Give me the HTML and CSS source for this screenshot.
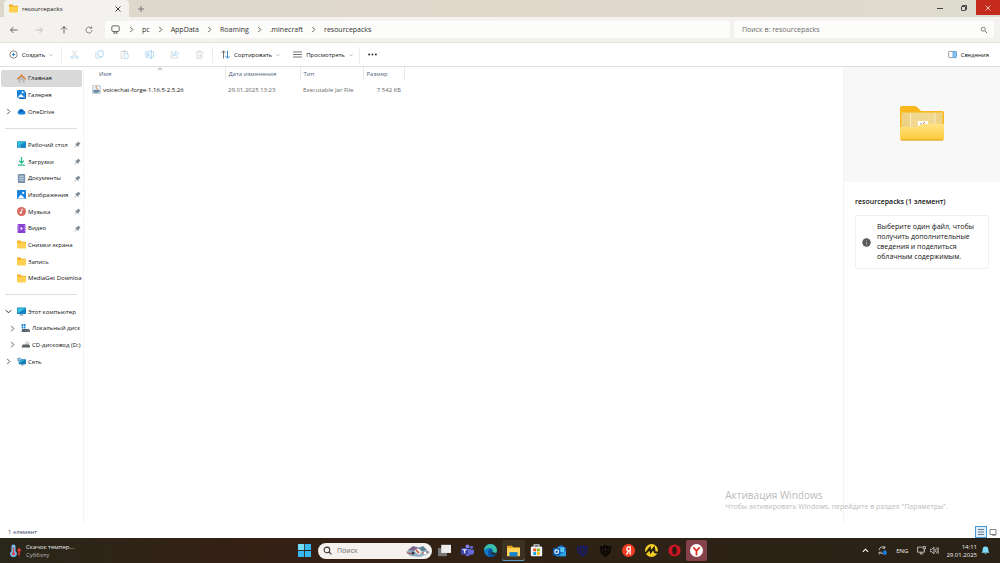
FILE: index.html
```html
<!DOCTYPE html>
<html lang="ru">
<head>
    <title>resourcepacks</title>
    <meta charset="UTF-8">
    <meta name="viewport" content="width=device-width, initial-scale=1.0">
    <link rel="stylesheet" href="styles.css">
</head>
<body>
    <!-- shared icons -->
    <svg class="sprite" aria-hidden="true">
        <symbol id="folder" viewBox="0 0 16 16">
            <path d="M0 3Q0 1 1.500 1H6l2 2h6.500Q16 3 16 4.500V8H0z" fill="#f0ab1c"/>
            <rect x="0" y="4.500" width="16" height="10.500" rx="1.200" fill="#ffd050"/>
        </symbol>
        <symbol id="right" viewBox="0 0 8 8"><path d="M2.500 1l3 3-3 3" fill="none" stroke="currentColor" stroke-width="1.100"/></symbol>
        <symbol id="down" viewBox="0 0 8 8"><path d="M1 2.500l3 3 3-3" fill="none" stroke="currentColor" stroke-width="1.100"/></symbol>
        <symbol id="pin" viewBox="0 0 16 16"><path d="M9.500 1l5.500 5.500-1.500.5-3 3-.5 4-3.500-3.500L2 15l-1-1 4.500-4.500L2 6l4-.5 3-3z" fill="#7f8b93"/></symbol>
        <symbol id="monitor" viewBox="0 0 16 16">
            <rect x="0" y="1" width="16" height="11.500" rx="1" fill="#1583c4"/>
            <path d="M1 2h14L1 11.500z" fill="#35c6df"/>
            <path d="M6 12.500h4V14h2v1H4v-1h2z" fill="#8795a0"/>
        </symbol>
        <symbol id="picture" viewBox="0 0 16 16">
            <rect width="16" height="16" rx="2" fill="#1683dc"/>
            <path d="M1 15l6-7 7 7z" fill="#fff"/>
            <circle cx="11" cy="5" r="2" fill="#fff"/>
        </symbol>
        <symbol id="shield" viewBox="0 0 16 16">
            <path d="M1 2l3 1 4-2 4 2 3-1-1 9-6 5-6-5z" fill="currentColor"/>
            <path d="M4.500 5v4L8 12l3.500-3V5M8 4v5M6 7h4" fill="none" stroke="#2c2014" stroke-width="1"/>
        </symbol>
    </svg>

    <header class="titlebar">
        <div class="tab">
            <svg class="icon"><use href="#folder"/></svg>
            <span class="tab-title">resourcepacks</span>
            <button class="tab-close" aria-label="Закрыть вкладку">
                <svg class="glyph" viewBox="0 0 8 8"><path d="M1.500 1.500l5 5M6.500 1.500l-5 5" stroke="#444"/></svg>
            </button>
        </div>
        <button class="tab-add" aria-label="Новая вкладка">
            <svg class="glyph" viewBox="0 0 8 8"><path d="M4 1v6M1 4h6" stroke="#777"/></svg>
        </button>
        <div class="window-buttons">
            <button aria-label="Свернуть"><svg class="glyph" viewBox="0 0 8 8"><path d="M1 4.500h6" stroke="#444"/></svg></button>
            <button aria-label="Свернуть в окно">
                <svg class="glyph" viewBox="0 0 8 8"><path d="M2.500 2V1.500h4v4H6" fill="none" stroke="#444"/><rect x="1.500" y="2.500" width="4" height="4" rx=".5" fill="none" stroke="#444"/></svg>
            </button>
            <button class="close" aria-label="Закрыть"><svg class="glyph" viewBox="0 0 8 8"><path d="M1.500 1.500l5 5M6.500 1.500l-5 5" stroke="#f0b5ac"/></svg></button>
        </div>
    </header>

    <div class="navbar">
        <div class="nav-buttons">
            <button aria-label="Назад"><svg class="glyph" viewBox="0 0 8 8"><path d="M7.500 4h-7M3.500 1l-3 3 3 3" fill="none" stroke="#555" stroke-width=".9"/></svg></button>
            <button aria-label="Вперед"><svg class="glyph" viewBox="0 0 8 8"><path d="M.5 4h7M4.500 1l3 3-3 3" fill="none" stroke="#b9b9b6" stroke-width=".9"/></svg></button>
            <button aria-label="Вверх"><svg class="glyph" viewBox="0 0 8 8"><path d="M4 7.500v-7M1 3.500l3-3 3 3" fill="none" stroke="#555" stroke-width=".9"/></svg></button>
            <button aria-label="Обновить"><svg class="glyph" viewBox="0 0 8 8"><path d="M7 4a3 3 0 1 1-1-2.200M6.700.5v1.800H4.900" fill="none" stroke="#666" stroke-width=".8"/></svg></button>
        </div>
        <nav class="address" aria-label="Адрес">
            <svg class="icon" viewBox="0 0 16 16"><rect x="1.500" y="1.500" width="13" height="10" rx="2" fill="none" stroke="#555" stroke-width="1.600"/><path d="M6 12v2M10 12v2M4 14.500h8" stroke="#555" stroke-width="1.400"/></svg>
            <svg class="chevron"><use href="#right"/></svg>
            <a href="#">pc</a>
            <svg class="chevron"><use href="#right"/></svg>
            <a href="#">AppData</a>
            <svg class="chevron"><use href="#right"/></svg>
            <a href="#">Roaming</a>
            <svg class="chevron"><use href="#right"/></svg>
            <a href="#">.minecraft</a>
            <svg class="chevron"><use href="#right"/></svg>
            <a href="#">resourcepacks</a>
        </nav>
        <label class="search">
            <input type="text" placeholder="Поиск в: resourcepacks" aria-label="Поиск в: resourcepacks">
            <svg class="glyph" viewBox="0 0 8 8"><circle cx="3.200" cy="3.200" r="2" fill="none" stroke="#666" stroke-width=".8"/><path d="M4.800 4.800L7 7" stroke="#666" stroke-width=".9"/></svg>
        </label>
    </div>

    <div class="toolbar">
        <button class="create">
            <svg class="icon" viewBox="0 0 16 16"><circle cx="8" cy="8" r="6.500" fill="none" stroke="#666" stroke-width="1.300"/><path d="M8 5v6M5 8h6" stroke="#2a83c9" stroke-width="1.600"/></svg>
            Создать
            <svg class="caret"><use href="#down"/></svg>
        </button>
        <div class="file-actions">
            <button aria-label="Вырезать"><svg class="icon" viewBox="0 0 16 16"><path d="M4 1l6.500 10M12 1L5.500 11" stroke="#ccc" stroke-width="1.300"/><circle cx="4" cy="13" r="2.200" fill="none" stroke="#9fcdee" stroke-width="1.300"/><circle cx="12" cy="13" r="2.200" fill="none" stroke="#9fcdee" stroke-width="1.300"/></svg></button>
            <button aria-label="Копировать"><svg class="icon" viewBox="0 0 16 16"><rect x="5.500" y="1.500" width="9" height="10" rx="2" fill="none" stroke="#9fcdee" stroke-width="1.400"/><path d="M3 5H1.500v9.500H10V13" fill="none" stroke="#b3d5ee" stroke-width="1.400"/></svg></button>
            <button aria-label="Вставить"><svg class="icon" viewBox="0 0 16 16"><path d="M6 15H2V2.500h11V6M5 1.500h5v2H5z" fill="none" stroke="#ccc" stroke-width="1.300"/><rect x="7.500" y="6.500" width="7" height="8.500" rx="1" fill="none" stroke="#9fcdee" stroke-width="1.300"/></svg></button>
            <button aria-label="Переименовать"><svg class="icon" viewBox="0 0 16 16"><path d="M9 3H1.500v10H9M13 3h2v10h-2M3.500 11l2-6 2 6M4.300 9h2.500" fill="none" stroke="#9fcdee" stroke-width="1.300"/><path d="M11 1v14M9.500 1h3M9.500 15h3" stroke="#8fc1e6" stroke-width="1.300"/></svg></button>
            <button aria-label="Поделиться"><svg class="icon" viewBox="0 0 16 16"><path d="M6 3H2v11.500h11V11" fill="none" stroke="#ccc" stroke-width="1.300"/><path d="M5 11q0-6 5-6V2l5 4.500-5 4V8q-3 0-5 3z" fill="none" stroke="#9fcdee" stroke-width="1.300"/></svg></button>
            <button aria-label="Удалить"><svg class="icon" viewBox="0 0 16 16"><path d="M1.500 3.500h13M6 3V1.500h4V3M3 4l1 11h8l1-11M6.500 7v5M9.500 7v5" fill="none" stroke="#ccc" stroke-width="1.300"/></svg></button>
        </div>
        <button class="view-button">
            <svg class="icon" viewBox="0 0 16 16"><path d="M4.500 15V1.500M1 5l3.500-3.500L8 5" fill="none" stroke="#555" stroke-width="1.500"/><path d="M11.500 1v13.500M8 11l3.500 3.500L15 11" fill="none" stroke="#2a83c9" stroke-width="1.700"/></svg>
            Сортировать
            <svg class="caret"><use href="#down"/></svg>
        </button>
        <button class="view-button">
            <svg class="icon" viewBox="0 0 16 16"><path d="M0 3.500h16M0 8h16M0 12.500h16" stroke="#666" stroke-width="1.600"/></svg>
            Просмотреть
            <svg class="caret"><use href="#down"/></svg>
        </button>
        <button class="more" aria-label="Подробнее"><svg class="icon" viewBox="0 0 16 16"><circle cx="2" cy="8" r="1.800" fill="#333"/><circle cx="8" cy="8" r="1.800" fill="#333"/><circle cx="14" cy="8" r="1.800" fill="#333"/></svg></button>
        <button class="details">
            <svg class="icon" viewBox="0 0 16 16"><path d="M9 2.500H2.500q-1.500 0-1.500 1.500v8q0 1.500 1.500 1.500H9" fill="none" stroke="#777" stroke-width="1.300"/><rect x="9" y="2.500" width="6" height="11" rx="1.500" fill="#8ccaf3" stroke="#2a83c9" stroke-width="1.300"/></svg>
            Сведения
        </button>
    </div>

    <div class="content">
        <nav class="sidebar" aria-label="Папки">
            <a href="#" class="active"><i></i>
                <svg class="icon" viewBox="0 0 16 16"><path d="M2.500 7v8.500h4v-5h3v5h4V7L8 3z" fill="#b9bdc1"/><path d="M.8 9.500L8 2l7.200 7.500" fill="none" stroke="#df7b27" stroke-width="2.400"/></svg>
                <span>Главная</span></a>
            <a href="#"><i></i><svg class="icon" viewBox="0 0 16 16"><path d="M4 14v2h10q2 0 2-2V4h-2v10z" fill="#0c5fae"/><rect width="14" height="14" rx="2" fill="#1683dc"/><path d="M1 13l6-6 6 6z" fill="#fff"/><circle cx="10" cy="4" r="1.800" fill="#fff"/></svg><span>Галерея</span></a>
            <a href="#"><svg class="chevron"><use href="#right"/></svg>
                <svg class="icon" viewBox="0 0 16 16"><path d="M4 13.500a4 4 0 0 1-.5-7.500A5 5 0 0 1 12 6.500a3.600 3.600 0 0 1 .5 7z" fill="#1583de"/><path d="M3.500 6A5 5 0 0 1 12 6.500L6 10z" fill="#0a5fb4"/></svg>
                <span>OneDrive</span></a>
            <hr>
            <a href="#"><i></i><svg class="icon" viewBox="0 0 16 16"><rect y="2" width="16" height="12" rx="1.500" fill="#1687c9"/><path d="M1 3h14L1 12z" fill="#32c4dc"/><path d="M2 12.500h5" stroke="#fff"/></svg><span>Рабочий стол</span><svg class="pin"><use href="#pin"/></svg></a>
            <a href="#"><i></i><svg class="icon" viewBox="0 0 16 16"><path d="M8 0v10.500M3.500 6.500L8 11l4.500-4.500M2 14.500h12" fill="none" stroke="#22b487" stroke-width="2.200"/></svg><span>Загрузки</span><svg class="pin"><use href="#pin"/></svg></a>
            <a href="#"><i></i><svg class="icon" viewBox="0 0 16 16"><rect x="1.500" y="0" width="13" height="16" rx="1.500" fill="#7892b0"/><path d="M4 4h8M4 7.500h8M4 11h8" stroke="#dfe8f1" stroke-width="1.500"/></svg><span>Документы</span><svg class="pin"><use href="#pin"/></svg></a>
            <a href="#"><i></i><svg class="icon"><use href="#picture"/></svg><span>Изображения</span><svg class="pin"><use href="#pin"/></svg></a>
            <a href="#"><i></i><svg class="icon" viewBox="0 0 16 16"><circle cx="8" cy="8" r="8" fill="#d6685f"/><circle cx="6.500" cy="10" r="2" fill="#fff"/><path d="M8.300 10V3.500l3 1.500" fill="none" stroke="#fff" stroke-width="1.400"/></svg><span>Музыка</span><svg class="pin"><use href="#pin"/></svg></a>
            <a href="#"><i></i><svg class="icon" viewBox="0 0 16 16"><rect x="1" width="14" height="16" rx="1.500" fill="#8840d2"/><path d="M3 2v12M13 2v12" stroke="#c79bf0" stroke-width="1.400" stroke-dasharray="2 2"/><path d="M6.500 5l4 3-4 3z" fill="#fff"/></svg><span>Видео</span><svg class="pin"><use href="#pin"/></svg></a>
            <a href="#"><i></i><svg class="icon"><use href="#folder"/></svg><span>Снимки экрана</span></a>
            <a href="#"><i></i><svg class="icon"><use href="#folder"/></svg><span>Запись</span></a>
            <a href="#"><i></i><svg class="icon"><use href="#folder"/></svg><span>MediaGet Downloa</span></a>
            <hr>
            <a href="#"><svg class="chevron open"><use href="#down"/></svg><svg class="icon"><use href="#monitor"/></svg><span>Этот компьютер</span></a>
            <a href="#" class="nested"><svg class="chevron"><use href="#right"/></svg><svg class="icon" viewBox="0 0 16 16"><path d="M1 0h3v3.500H1zM5 0h3v3.500H5zM1 4.500h3V8H1zM5 4.500h3V8H5z" fill="#1487d9"/><path d="M2 9h12l2 2v3H1z" fill="#59636c"/><path d="M12 12.500h2" stroke="#d6e6ef"/></svg><span>Локальный диск</span></a>
            <a href="#" class="nested"><svg class="chevron"><use href="#right"/></svg><svg class="icon" viewBox="0 0 16 16"><circle cx="11" cy="6" r="4" fill="#d5d9dc"/><path d="M3 8h11l2 2v3.500H1z" fill="#5b6166"/></svg><span>CD-дисковод (D:)</span></a>
            <a href="#"><svg class="chevron"><use href="#right"/></svg><svg class="icon" viewBox="0 0 16 16"><path d="M3 4h13v9H3z" fill="#157db9"/><path d="M4 5h10L4 12z" fill="#2fa8d2"/><circle cx="4" cy="4.500" r="3.700" fill="#5f9dc2"/><path d="M1 4.500h6M4 1v7" stroke="#b9dbea"/><path d="M7 13h5v2H7z" fill="#7f8d98"/></svg><span>Сеть</span></a>
        </nav>

        <main class="files">
            <svg class="sort-mark" viewBox="0 0 8 5"><path d="M1 4l3-3 3 3" fill="none" stroke="#777"/></svg>
            <table>
                <colgroup>
                    <col class="col-name"><col class="col-date"><col class="col-type"><col class="col-size">
                </colgroup>
                <thead>
                    <tr><th class="name">Имя</th><th>Дата изменения</th><th>Тип</th><th>Размер</th></tr>
                </thead>
                <tbody>
                    <tr>
                        <td class="name">
                            <svg class="icon" viewBox="0 0 16 16"><path d="M1 1h14v14H1z" fill="#e9eef2" stroke="#a5b0b9"/><path d="M8.500 2q-3 2 0 4t0 3" fill="none" stroke="#e2762b" stroke-width="1.500"/><path d="M3 9.500h8v3q-4 2.500-8 0zM11 10h2v2h-2" fill="#7d9ab3" stroke="#4d7395" stroke-width="1.200"/></svg>
                            voicechat-forge-1.16.5-2.5.26
                        </td>
                        <td>29.01.2025 13:23</td>
                        <td>Executable Jar File</td>
                        <td class="size">7 542 КБ</td>
                    </tr>
                </tbody>
            </table>
        </main>

        <aside class="preview">
            <div class="preview-image">
                <svg class="big-folder" viewBox="0 0 46 36">
                    <defs><linearGradient id="front" x1="0" y1="0" x2="0" y2="1"><stop offset="0" stop-color="#ffe486"/><stop offset="1" stop-color="#fdc938"/></linearGradient></defs>
                    <path d="M1 3q0-2 2-2h12q2 0 3 1l4 4h21q2 0 2 2v22H1z" fill="#fab81c"/>
                    <path d="M2.500 7.500h41V26h-41z" fill="#efd384"/>
                    <path d="M11 8h25v16H11z" fill="#f0d891"/>
                    <path d="M11.500 8v14M36 8v12" stroke="#f9ecc6"/>
                    <path d="M19 16h10v6H19z" fill="#fff"/>
                    <path d="M21 19h2" stroke="#8399ad"/>
                    <path d="M26 17l-2 2" stroke="#df6a4a"/>
                    <path d="M1 22h15q2 0 4-1.500t4-1.500h21v14.500q0 2-2 2H3q-2 0-2-2z" fill="url(#front)"/>
                    <path d="M2 35h42" stroke="#dfa52a"/>
                </svg>
            </div>
            <h2>resourcepacks (1 элемент)</h2>
            <div class="info">
                <svg class="icon" viewBox="0 0 16 16"><circle cx="8" cy="8" r="7.500" fill="#5a5a5a"/><path d="M8 7v5M8 4v1.500" stroke="#bbb" stroke-width="1.400"/></svg>
                <p>Выберите один файл, чтобы получить дополнительные сведения и поделиться облачным содержимым.</p>
            </div>
        </aside>
    </div>

    <div class="statusbar">
        <span>1 элемент</span>
        <div class="layout-buttons">
            <button class="selected" aria-label="Таблица"><svg class="glyph" viewBox="0 0 8 8"><path d="M1 1.500h6M1 4h6M1 6.500h6" stroke="#6a7a86"/></svg></button>
            <button aria-label="Крупные значки"><svg class="glyph" viewBox="0 0 8 8"><path d="M1 1.500h6v5H1z" fill="none" stroke="#888"/><path d="M3 7h4" stroke="#666"/></svg></button>
        </div>
    </div>

    <div class="watermark">
        <div class="watermark-title">Активация Windows</div>
        <div>Чтобы активировать Windows, перейдите в раздел "Параметры".</div>
    </div>

    <footer class="taskbar">
        <button class="weather">
            <svg class="app" viewBox="0 0 16 16"><path d="M3 3a2.500 2.500 0 0 1 5 0v6a4 4 0 1 1-5 0z" fill="#75bdf0"/><circle cx="5.500" cy="12" r="2" fill="#e6423f"/><path d="M5.500 4v8" stroke="#e6423f" stroke-width="1.500"/><path d="M12.500 14V6M10.500 8.500l2-2.500 2 2.500" fill="none" stroke="#e33b2e" stroke-width="1.800"/></svg>
            <span>Скачок темпер...<br><small>Субботу</small></span>
        </button>
        <div class="apps">
            <button aria-label="Пуск"><svg class="app" viewBox="0 0 16 16"><path d="M0 0h7.500v7.500H0zM8.500 0H16v7.500H8.500zM0 8.500h7.500V16H0zM8.500 8.500H16V16H8.500z" fill="#36b8f2"/><path d="M0 0h7.500v7.500H0z" fill="#73dbfb"/></svg></button>
            <label class="task-search">
                <svg class="icon" viewBox="0 0 16 16"><circle cx="7" cy="7" r="5" fill="none" stroke="#333" stroke-width="1.800"/><path d="M11 11l4 4" stroke="#333" stroke-width="2"/></svg>
                <input type="text" placeholder="Поиск" aria-label="Поиск">
                <svg class="doodle" viewBox="0 0 26 12">
                    <path d="M1 7l5-4 8-1 5 2 6 3-4 3-7 2-9-1z" fill="#92afc4"/>
                    <path d="M3 5l5-4 6 2-3 3z" fill="#7e6792"/>
                    <path d="M9 6l4-3 4 4-3 3z" fill="#f0eade"/>
                    <path d="M14 3l4-2 4 4-5 1z" fill="#5b8090"/>
                    <path d="M2 8l7 1M17 8l6-1M11 5l3 3" stroke="#b84938" stroke-width="1.200"/>
                    <circle cx="8" cy="8" r="1.500" fill="#343950"/><circle cx="20" cy="8" r="1.500" fill="#fff"/>
                </svg>
            </label>
            <button aria-label="Представление задач"><svg class="app" viewBox="0 0 16 16"><path d="M0 5h11v10H0z" fill="#777"/><path d="M4 1h12v10H4z" fill="#eee"/></svg></button>
            <button aria-label="Teams"><svg class="app" viewBox="0 0 16 16"><circle cx="8" cy="3" r="2.500" fill="#7a80e5"/><circle cx="13" cy="4" r="2" fill="#5c62ce"/><path d="M5 6h7v6q-1 3-4 3t-3-3zM12 7h4v4q-1 3-4 2z" fill="#666cd8"/><rect y="5" width="9" height="8" rx="1" fill="#4348ae"/><path d="M2 7h5M4.500 7v4.500" stroke="#fff" stroke-width="1.300"/></svg></button>
            <button aria-label="Edge"><svg class="app" viewBox="0 0 16 16"><circle cx="8" cy="8" r="8" fill="#1278c8"/><path d="M0 8a8 8 0 0 1 16 0q0 3-4 3-3 0-2-2 1-3-2-4Q3 4 0 8z" fill="#38bfa6"/><path d="M5 10q0-4 4-4 3 1 1 4 0 2 5 1-2 5-7 5-3-1-3-6z" fill="#0b4fa0"/><path d="M10 9q0 2 5 2-1 2-4 2-3-1-1-4z" fill="#2b2114"/></svg></button>
            <button class="open" aria-label="Проводник"><svg class="app" viewBox="0 0 16 16"><path d="M0 2h6l2 2h8v10H0z" fill="#eaa51b"/><path d="M0 5h16v10H0z" fill="#ffd45a"/><path d="M3 10h10v5H3z" fill="#1684cf"/></svg></button>
            <button aria-label="Microsoft Store"><svg class="app" viewBox="0 0 16 16"><path d="M5 4V1h6v3" fill="none" stroke="#cdd6de" stroke-width="1.400"/><rect x="1" y="3" width="14" height="12" rx="1.500" fill="#f2f4f6"/><path d="M4 5.500h3.500V9H4z" fill="#f25022"/><path d="M8.500 5.500H12V9H8.500z" fill="#7fba00"/><path d="M4 10h3.500v3.500H4z" fill="#00a4ef"/><path d="M8.500 10H12v3.500H8.500z" fill="#ffb900"/></svg></button>
            <button aria-label="Outlook"><svg class="app" viewBox="0 0 16 16"><path d="M4 5l6-4 6 4v10H4z" fill="#1466b8"/><path d="M6 4h8v6H6z" fill="#57c6f3"/><path d="M4 9l6 3 6-4v7H4z" fill="#2a9fe2"/><rect y="5" width="9" height="9" rx="1" fill="#0d5fb0"/><circle cx="4.500" cy="9.500" r="2.200" fill="none" stroke="#fff" stroke-width="1.400"/></svg></button>
            <button class="ships" aria-label="Мир кораблей"><svg class="app"><use href="#shield"/></svg></button>
            <button class="tanks" aria-label="Мир танков"><svg class="app"><use href="#shield"/></svg></button>
            <button aria-label="Яндекс"><svg class="app" viewBox="0 0 16 16"><circle cx="8" cy="8" r="8" fill="#f33c22"/><path d="M10 13V3.500H8.500q-2.500 0-2.500 2.500t2.500 2.500H10M8 8.500L5.500 13" fill="none" stroke="#fff" stroke-width="1.600"/></svg></button>
            <button aria-label="MediaGet"><svg class="app" viewBox="0 0 16 16"><circle cx="8" cy="8" r="8" fill="#f4cf24"/><path d="M0 11q2 0 3-2l3-4 1 5 4-5 1 5q1 1 4 0" fill="none" stroke="#211d14" stroke-width="2.400"/></svg></button>
            <button aria-label="Opera"><svg class="app" viewBox="0 0 16 16"><circle cx="8" cy="8" r="7.500" fill="#cc1523"/><ellipse cx="8" cy="8" rx="2.800" ry="5" fill="#2c1b13"/></svg></button>
            <button class="current" aria-label="Яндекс Браузер"><svg class="app" viewBox="0 0 16 16"><circle cx="8" cy="8" r="8" fill="#fff"/><path d="M4 4l4 4.500L12 4M8 8v6" fill="none" stroke="#e63223" stroke-width="2.200"/></svg></button>
        </div>
        <div class="tray">
            <svg class="caret up" viewBox="0 0 8 8"><path d="M1 5.500l3-3 3 3" fill="none" stroke="#fff" stroke-width="1.300"/></svg>
            <svg class="icon" viewBox="0 0 16 16"><path d="M2 7a6 6 0 0 1 10-4M12 0v4H8M13 8a6 6 0 0 1-9 4.500M2 15v-4h4" fill="none" stroke="#ddd" stroke-width="1.500"/><circle cx="12" cy="12" r="4" fill="#1479d6"/></svg>
            <span class="lang">ENG</span>
            <span class="devices">
                <svg class="icon" viewBox="0 0 16 16"><path d="M10 2H1v9h12V8M5 14h6M7 11v3" fill="none" stroke="#ddd" stroke-width="1.400"/><path d="M11 1h4v4h-4zM13 5v4" fill="none" stroke="#ddd" stroke-width="1.400"/></svg>
                <svg class="icon" viewBox="0 0 16 16"><path d="M0 6h3l4-4v12L3 10H0z" fill="none" stroke="#ddd" stroke-width="1.400"/><path d="M9 5q2 3 0 6M11.500 3q3.500 5 0 10M14 2q4 6 0 12" fill="none" stroke="#ddd" stroke-width="1.300"/></svg>
            </span>
            <time>14:11<br>29.01.2025</time>
            <svg class="icon bell" viewBox="0 0 16 16"><path d="M1 12q2-2 2-6a5 5 0 0 1 10 0q0 4 2 6zM6 13h4q-2 3-4 0z" fill="#7fdcfc"/></svg>
        </div>
    </footer>
</body>
</html>
```

FILE: styles.css
```css
* {
    box-sizing: border-box;
}
body {
    font-family: "Open Sans", "Noto Sans", sans-serif;
    font-size: 6px;
    line-height: 8px;
    color: #111;
    background: white;
    margin: 0;
    height: 100vh;
    display: flex;
    flex-direction: column;
    overflow: hidden;
    position: relative;
}
button, input {
    font: inherit;
    color: inherit;
    background: none;
    border: none;
    padding: 0;
    margin: 0;
    outline: none;
}
button {
    display: flex;
    align-items: center;
    justify-content: center;
}
a {
    color: inherit;
    text-decoration: none;
}
svg {
    flex: none;
    display: block;
}
.sprite {
    width: 0;
    height: 0;
    position: absolute;
}
.icon {
    width: 9px;
    height: 9px;
}
.glyph {
    width: 8px;
    height: 8px;
}
.chevron {
    width: 7px;
    height: 7px;
    color: #555;
}
.caret {
    width: 4px;
    height: 4px;
    color: #888;
}

/* title bar */
.titlebar {
    height: 17px;
    display: flex;
    flex: none;
    background: linear-gradient(to right, #dcd8cc, #e0d8cb 50%, #dedbcf);
}
.tab {
    width: 125px;
    margin-left: 4px;
    padding: 0 7px 0 5px;
    display: flex;
    align-items: center;
    gap: 4px;
    background: #f4f2ee;
    border-radius: 4px 4px 0 0;
}
.tab-title {
    flex: 1;
}
.tab-add {
    width: 24px;
}
.window-buttons {
    display: flex;
    margin-left: auto;
}
.window-buttons button {
    width: 24px;
    height: 15px;
}
.window-buttons .close {
    background: #c42b1c;
}

/* address row */
.navbar {
    height: 26px;
    flex: none;
    display: flex;
    align-items: center;
    gap: 4px;
    padding: 0 6px 0 1px;
    background: #f4f2ee;
    border-bottom: 1px solid #e3e1dc;
    font-size: 7px;
}
.nav-buttons {
    display: flex;
    width: 100px;
}
.nav-buttons button {
    width: 25px;
}
.address, .search {
    height: 17px;
    display: flex;
    align-items: center;
    background: #fcfcfa;
    border-radius: 2px;
}
.address {
    flex: 1;
    gap: 7px;
    padding-left: 6px;
    color: #333;
}
.address .icon {
    margin-right: 1px;
}
.search {
    width: 260px;
    padding: 0 6px 0 8px;
}
.search input {
    flex: 1;
}
::placeholder {
    color: #6b6b6b;
    opacity: 1;
}

/* commands */
.toolbar {
    height: 24px;
    flex: none;
    display: flex;
    align-items: center;
    padding: 0 11px 0 9px;
    border-bottom: 1px solid #dfded6;
}
.toolbar button {
    gap: 4px;
}
.create {
    width: 44px;
}
.file-actions {
    display: flex;
    margin: 0 8px;
    border: solid #ececec;
    border-width: 0 1px;
    height: 16px;
}
.file-actions button {
    width: 25px;
}
.toolbar .view-button {
    margin-right: 13px;
}
.toolbar .more {
    height: 16px;
    margin-left: -7px;
    padding-left: 8px;
    border-left: 1px solid #ececec;
}
.toolbar .details {
    margin-left: auto;
}

/* main area */
.content {
    flex: 1;
    min-height: 0;
    display: flex;
}
.sidebar {
    width: 83px;
    height: 300px;
    margin-top: 3px;
    display: grid;
    grid-template-rows: repeat(18, 1fr);
}
.sidebar a {
    margin: 0 1px;
    padding-left: 4px;
    display: flex;
    align-items: center;
    gap: 2px;
    min-width: 0;
    border-radius: 2px;
    white-space: nowrap;
}
.sidebar a.active {
    background: #d9d9d9;
}
.sidebar a.nested {
    padding-left: 8px;
}
.sidebar i {
    width: 7px;
}
.sidebar .icon {
    margin-left: 3px;
}
.sidebar span {
    flex: 1;
    min-width: 0;
}
.sidebar .open {
    color: #222;
}
.pin {
    width: 7px;
    height: 7px;
    margin-right: 1px;
}
.sidebar hr {
    width: 72px;
    margin: auto 5px;
    border: none;
    border-top: 1px solid #dedede;
}
.files {
    flex: 1;
    border-left: 1px solid #f5f5f5;
    position: relative;
}
.sort-mark {
    width: 6px;
    height: 4px;
    position: absolute;
    left: 73px;
    top: 0;
}
.files table {
    width: 320px;
    table-layout: fixed;
    border-collapse: collapse;
}
.col-name {
    width: 141px;
}
.col-date {
    width: 75px;
}
.col-type {
    width: 63px;
}
.col-size {
    width: 41px;
}
.files th {
    height: 13px;
    padding: 0 3px;
    border-right: 1px solid #e9e9e9;
    color: #53657f;
    font-weight: normal;
    text-align: left;
}
.files th.name {
    padding-left: 15px;
}
.files td {
    height: 19px;
    padding: 0 3px;
    color: #666;
    white-space: nowrap;
}
.files td.name {
    display: flex;
    align-items: center;
    gap: 2px;
    padding-left: 8px;
    color: #111;
}
.files td.size {
    text-align: right;
}
.preview {
    width: 157px;
    border-left: 1px solid #f5f5f5;
}
.preview-image {
    height: 115px;
    padding-bottom: 4px;
    display: flex;
    align-items: center;
    justify-content: center;
    background: #f8f8f8;
}
.big-folder {
    width: 46px;
    height: 36px;
}
.preview h2 {
    margin: 15px 11px 8px;
    font-size: 7px;
    line-height: 10px;
    font-weight: 600;
}
.info {
    margin: 0 11px;
    padding: 6px;
    display: flex;
    align-items: center;
    gap: 6px;
    border: 1px solid #f0f0f0;
    border-radius: 2px;
    font-size: 7px;
    line-height: 10px;
}
.info p {
    margin: 0;
}

.statusbar {
    height: 13px;
    flex: none;
    display: flex;
    align-items: center;
    justify-content: space-between;
    padding: 0 2px 0 8px;
    color: #33445f;
}
.layout-buttons {
    display: flex;
}
.layout-buttons button {
    width: 11px;
    height: 12px;
}
.layout-buttons .selected {
    width: 12px;
    background: #dcedf9;
    border: 1px solid #4b9bd5;
}
.watermark {
    position: absolute;
    right: 52px;
    bottom: 51px;
    color: #bbb;
    font-size: 7px;
    line-height: 10px;
}
.watermark-title {
    font-size: 10px;
    line-height: 14px;
}

/* taskbar */
.taskbar {
    height: 25px;
    flex: none;
    display: grid;
    grid-template-columns: 1fr auto 1fr;
    align-items: center;
    background: linear-gradient(to right, #29271a, #352014 25%, #2e2215 60%, #2a2217);
    color: #eee;
}
.app {
    width: 13px;
    height: 13px;
}
.weather {
    justify-self: start;
    padding-left: 9px;
    gap: 4px;
    text-align: left;
}
.weather small {
    font-size: 6px;
    color: #bbb;
}
.apps {
    display: flex;
    align-items: center;
}
.apps button {
    width: 23px;
    height: 21px;
}
.apps .open {
    background: #3b3224;
    box-shadow: inset 0 -1px #5a9ac4;
    border-radius: 2px;
}
.apps .current {
    width: 21px;
    background: #85424b;
    border-radius: 2px;
}
.ships {
    color: #191d60;
}
.tanks {
    color: #080706;
}
.task-search {
    width: 114px;
    height: 16px;
    margin: 0 1px 0 2px;
    padding: 0 1px 0 5px;
    display: flex;
    align-items: center;
    gap: 5px;
    background: #f4f1ee;
    border-radius: 8px;
    font-size: 7px;
    color: #333;
}
.task-search input {
    flex: 1;
    min-width: 0;
}
.doodle {
    width: 26px;
    height: 12px;
}
.tray {
    display: flex;
    align-items: center;
    justify-content: flex-end;
    gap: 9px;
    padding-right: 10px;
}
.tray .up {
    width: 7px;
    height: 7px;
}
.devices {
    display: flex;
    gap: 4px;
}
.tray time {
    margin-left: -2px;
    text-align: right;
}
.tray .bell {
    margin-left: -5px;
}
```
